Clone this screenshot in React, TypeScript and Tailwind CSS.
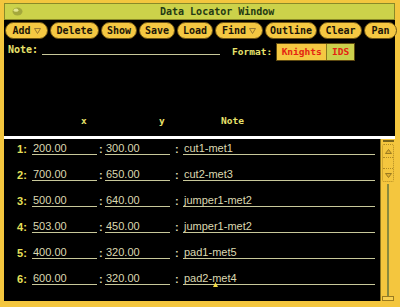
import React from 'react';

const mono = "font-['DejaVu_Sans_Mono','Liberation_Mono',monospace]";

const buttons = [
  { label: 'Add', w: 'w-[43px]', menu: true },
  { label: 'Delete', w: 'w-[49px]' },
  { label: 'Show', w: 'w-[36px]' },
  { label: 'Save', w: 'w-[36px]' },
  { label: 'Load', w: 'w-[36px]' },
  { label: 'Find', w: 'w-[48px]', menu: true },
  { label: 'Outline', w: 'w-[52px]' },
  { label: 'Clear', w: 'w-[43px]' },
  { label: 'Pan', w: 'w-[33px]' },
];

const rows = [
  { x: '200.00', y: '300.00', note: 'cut1-met1' },
  { x: '700.00', y: '650.00', note: 'cut2-met3' },
  { x: '500.00', y: '640.00', note: 'jumper1-met2' },
  { x: '503.00', y: '450.00', note: 'jumper1-met2' },
  { x: '400.00', y: '320.00', note: 'pad1-met5' },
  { x: '600.00', y: '320.00', note: 'pad2-met4' },
];

function MenuMark() {
  return (
    <svg width="7" height="6" viewBox="0 0 7 6" className="ml-[3px]">
      <path d="M0.5 0.5 L6.5 0.5 L3.5 5.5 Z" fill="none" stroke="#9a7a30" strokeWidth="1" />
    </svg>
  );
}

function Field({ value, w, caret }: { value: string; w: string; caret?: boolean }) {
  return (
    <span
      className={`relative flex h-[16px] ${w} items-end border-b border-[#c8c89a] pl-[1px] text-[11px] leading-[11px] text-[#dcd8b0]`}
    >
      {value}
      {caret && (
        <svg width="5" height="5" viewBox="0 0 5 5" className="absolute bottom-[-3px] left-[30px]">
          <path d="M2.5 0 L5 5 L0 5 Z" fill="#f0d840" />
        </svg>
      )}
    </span>
  );
}

export default function App() {
  return (
    <div className="flex h-[307px] w-[400px] flex-col overflow-hidden bg-[#f4c63e] pb-[6px] pl-[4px] pr-[5px] pt-[3px]">
      {/* title bar */}
      <div className="flex h-[17px] shrink-0 items-center border border-[#8a8a28] bg-[#ccd24a]">
        <svg width="11" height="9" viewBox="0 0 11 9" className="ml-[7px]">
          <ellipse cx="5.5" cy="4.5" rx="5" ry="4" fill="#a4a83c" />
          <ellipse cx="4" cy="3.2" rx="2.4" ry="1.6" fill="#e4e690" />
        </svg>
        <span className={`${mono} ml-[137px] text-[10px] font-bold leading-[12px] text-[#243a14]`}>
          Data Locator Window
        </span>
      </div>

      {/* upper panel */}
      <div className="flex h-[116px] shrink-0 flex-col bg-black pt-[2px]">
        <div className="flex h-[17px] gap-[2px] pl-[1px]">
          {buttons.map((b) => (
            <div
              key={b.label}
              className={`${b.w} ${mono} flex shrink-0 items-center justify-center rounded-full border border-[#6e5414] bg-[#f5c842] text-[10px] font-bold leading-[12px] text-[#1c1608]`}
            >
              {b.label}
              {b.menu && <MenuMark />}
            </div>
          ))}
        </div>

        <div className={`${mono} mt-[4px] flex h-[18px] items-start pl-[4px] text-[9.5px] font-bold text-[#e8e26c]`}>
          <div className="mt-[1px] flex h-[11px] items-end">
            <span className="text-[10px] leading-[11px]">Note:</span>
            <span className="ml-[4px] h-[11px] w-[178px] border-b border-[#c8c89a]" />
          </div>
          <span className="ml-[12px] self-center leading-[12px]">Format:</span>
          <div className="ml-[4px] flex h-[18px] border border-[#5c4810]">
            <span className="flex w-[49px] items-center justify-center bg-[#f5c842] leading-[12px] text-[#e42412]">
              Knights
            </span>
            <span className="flex w-[28px] items-center justify-center border-l border-[#8a7a20] bg-[#ccd04c] leading-[12px] text-[#e42412]">
              IDS
            </span>
          </div>
        </div>

        <div className={`${mono} mt-auto flex pb-[9px] pl-[77px] text-[9.5px] font-bold leading-[12px] text-[#e8e26c]`}>
          <span className="w-[78px]">x</span>
          <span className="w-[62px]">y</span>
          <span>Note</span>
        </div>
      </div>

      <div className="h-[3px] shrink-0 bg-white" />

      {/* lower panel */}
      <div className="flex min-h-0 flex-1">
        <div className="flex flex-1 flex-col bg-black pl-[13px] font-['Liberation_Sans',Arial,sans-serif]">
          {rows.map((r, i) => (
            <div key={i} className="flex h-[26px] shrink-0 items-start">
              <span className="flex h-[16px] w-[15px] items-end text-[11px] font-bold leading-[11px] text-[#e8e05a]">
                {i + 1}:
              </span>
              <Field value={r.x} w="w-[65px]" />
              <span className="flex h-[16px] w-[8px] items-end pl-[2px] text-[11px] font-bold leading-[11px] text-[#dcd8b0]">
                :
              </span>
              <Field value={r.y} w="w-[65px]" />
              <span className="flex h-[16px] w-[13px] items-end pl-[5px] text-[11px] font-bold leading-[11px] text-[#dcd8b0]">
                :
              </span>
              <Field value={r.note} w="w-[192px]" caret={i === 5} />
            </div>
          ))}
        </div>

        {/* scrollbar */}
        <div className="flex w-[15px] shrink-0 flex-col items-center border-l border-[#8a7420] bg-[#f4c63e] pt-[1px]">
          <div className="h-[2px] w-[11px] bg-[#7a6418]" />
          <div className="mt-[2px] flex h-[38px] w-[12px] flex-col rounded-[2px] border border-dotted border-[#b08a24]">
            <div className="flex h-[12px] items-center justify-center">
              <svg width="7" height="5" viewBox="0 0 7 5">
                <path d="M3.5 0.5 L6.5 4.5 L0.5 4.5 Z" fill="#e0b030" stroke="#9a7a20" strokeWidth="1" />
              </svg>
            </div>
            <div className="h-[12px] border-y border-dotted border-[#b08a24]" />
            <div className="flex flex-1 items-center justify-center">
              <svg width="7" height="5" viewBox="0 0 7 5">
                <path d="M0.5 0.5 L6.5 0.5 L3.5 4.5 Z" fill="#e0b030" stroke="#9a7a20" strokeWidth="1" />
              </svg>
            </div>
          </div>
          <div className="mt-[2px] w-[2px] flex-1 bg-[#8a8a3c]" />
          <div className="h-[5px] w-[12px] border border-[#9a7a20] bg-[#f8d050]" />
        </div>
      </div>
    </div>
  );
}
